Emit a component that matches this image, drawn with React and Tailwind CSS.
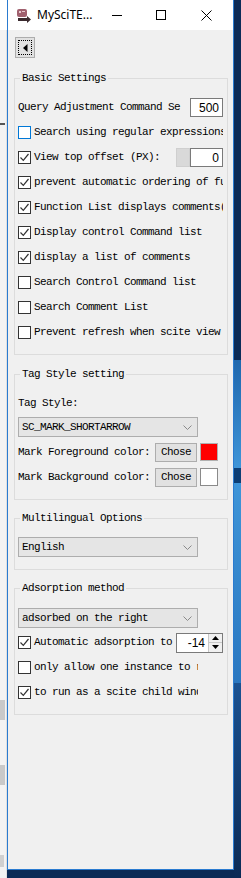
import React from "react";

const mono = "font-['Liberation_Mono',monospace] text-[11px] tracking-[-0.6px] text-black";

function Check({ checked, focus }) {
  return (
    <span
      className={`flex h-[13px] w-[13px] shrink-0 items-center justify-center border bg-white ${
        focus ? "border-[#0078d7]" : "border-[#333]"
      }`}
    >
      {checked && (
        <svg width="11" height="11" viewBox="0 0 11 11">
          <path d="M1.5 5.5 L4.3 8.3 L9.5 2" fill="none" stroke="#333" strokeWidth="1.2" />
        </svg>
      )}
    </span>
  );
}

function CheckRow({ label, checked, focus, width, children }) {
  return (
    <div className="flex h-[25px] items-center">
      <div className={`flex items-center gap-[3px] overflow-hidden whitespace-nowrap ${width || "flex-1"}`}>
        <Check checked={checked} focus={focus} />
        <span className={mono}>{label}</span>
      </div>
      {children}
    </div>
  );
}

function Select({ value }) {
  return (
    <div className="flex h-[20px] w-[180px] items-center justify-between border border-[#adadad] bg-[#e5e5e5] pl-[3px] pr-[5px]">
      <span className={mono}>{value}</span>
      <svg width="9" height="5" viewBox="0 0 9 5">
        <path d="M0.5 0.5 L4.5 4.5 L8.5 0.5" fill="none" stroke="#8a8a8a" strokeWidth="1" />
      </svg>
    </div>
  );
}

function Group({ title, className, children }) {
  return (
    <fieldset className={`ml-[6px] mr-[5px] min-w-0 border border-[#dcdcdc] pl-[3px] pr-[4px] ${className}`}>
      <legend className={`ml-[2px] px-[2px] leading-[14px] ${mono}`}>{title}</legend>
      {children}
    </fieldset>
  );
}

function Chose() {
  return (
    <div className={`flex h-[19px] w-[42px] items-center justify-center border border-[#adadad] bg-[#e1e1e1] ${mono}`}>
      Chose
    </div>
  );
}

export default function App() {
  return (
    <div className="flex h-[878px] w-[241px] overflow-hidden bg-[#0b2a55]">
      {/* window behind, left */}
      <div className="flex h-[878px] w-[7px] flex-col bg-[#f3f3f3]">
        <div className="h-[30px] bg-white" />
        <div className="flex flex-1 flex-col border-r border-[#e0e0e0]">
          <div className="h-[93px]" />
          <div className="h-[2px] w-[5px] bg-[#555]" />
          <div className="h-[575px]" />
          <div className="h-[20px] w-[5px] bg-[#c9c9c9]" />
          <div className="h-[45px]" />
          <div className="h-[20px] w-[5px] bg-[#c9c9c9]" />
          <div className="h-[70px]" />
          <div className="h-[12px] w-[4px] bg-[#d0d0d0]" />
        </div>
      </div>

      {/* dialog */}
      <div className="flex h-[870px] w-[227px] shrink-0 flex-col border-x border-b border-[#2a7bd0] bg-[#f0f0f0]">
        {/* title bar */}
        <div className="flex h-[30px] shrink-0 items-center bg-white">
          <svg className="ml-[8px]" width="16" height="15" viewBox="0 0 16 15">
            <rect x="1" y="1" width="10" height="8" rx="2" fill="#a0606e" />
            <rect x="3" y="3" width="2" height="2" fill="#e8c8cf" />
            <rect x="6" y="3" width="3" height="1" fill="#e8c8cf" />
            <path d="M2 10 L11 10 L11 8 L15 11.5 L11 15 L11 13 L2 13 Z" fill="#3a2a2e" />
          </svg>
          <span className="ml-[5px] font-['Noto_Sans',sans-serif] text-[12px] text-black">MySciTE...</span>
          <div className="ml-[20px] h-px w-[10px] bg-black" />
          <div className="ml-[34px] h-[10px] w-[10px] border border-black" />
          <svg className="ml-[35px]" width="11" height="11" viewBox="0 0 11 11">
            <path d="M0.5 0.5 L10.5 10.5 M10.5 0.5 L0.5 10.5" stroke="#000" strokeWidth="1" />
          </svg>
        </div>

        {/* back button */}
        <div className="ml-[7px] mt-[7px] flex h-[21px] w-[20px] items-center justify-center border border-[#adadad] bg-[#e1e1e1]">
          <div className="flex h-[15px] w-[14px] items-center justify-center border border-dotted border-black">
            <svg width="5" height="8" viewBox="0 0 5 8">
              <path d="M4.5 0 L0 4 L4.5 8 Z" fill="#000" />
            </svg>
          </div>
        </div>

        <Group title="Basic Settings" className="mt-[13px] pb-[9px] pt-[10px]">
          <div className="flex h-[25px] items-center">
            <span className={`flex-1 overflow-hidden whitespace-nowrap ${mono}`}>Query Adjustment Command Se</span>
            <div className="flex h-[19px] w-[33px] items-center justify-end border border-[#7a7a7a] bg-white pr-[3px] font-['Liberation_Sans',sans-serif] text-[12px]">
              500
            </div>
          </div>
          <CheckRow label="Search using regular expressions" focus />
          <CheckRow label="View top offset (PX):" checked>
            <div className="h-[19px] w-[14px] border border-[#cfcfcf] bg-[#d9d9d9]" />
            <div className="flex h-[19px] w-[33px] items-center justify-end border border-[#7a7a7a] bg-white pr-[3px] font-['Liberation_Sans',sans-serif] text-[12px]">
              0
            </div>
          </CheckRow>
          <CheckRow label="prevent automatic ordering of functions" checked />
          <CheckRow label="Function List displays comments(" checked />
          <CheckRow label="Display control Command list" checked />
          <CheckRow label="display a list of comments" checked />
          <CheckRow label="Search Control Command list" />
          <CheckRow label="Search Comment List" />
          <CheckRow label="Prevent refresh when scite view" />
        </Group>

        <Group title="Tag Style setting" className="mt-[12px] pb-[12px] pt-[12px]">
          <div className={`flex h-[20px] items-center ${mono}`}>Tag Style:</div>
          <div className="mt-[4px]">
            <Select value="SC_MARK_SHORTARROW" />
          </div>
          <div className="mt-[5px] flex h-[20px] items-center">
            <span className={`w-[137px] whitespace-nowrap ${mono}`}>Mark Foreground color:</span>
            <Chose />
            <div className="ml-[3px] h-[18px] w-[18px] border border-[#b0b0b0] bg-[#ff0000]" />
          </div>
          <div className="mt-[5px] flex h-[20px] items-center">
            <span className={`w-[137px] whitespace-nowrap ${mono}`}>Mark Background color:</span>
            <Chose />
            <div className="ml-[3px] h-[18px] w-[18px] border border-[#8a8a8a] bg-white" />
          </div>
        </Group>

        <Group title="Multilingual Options" className="mt-[11px] pb-[12px] pt-[12px]">
          <Select value="English" />
        </Group>

        <Group title="Adsorption method" className="mt-[11px] pb-[9px] pt-[13px]">
          <Select value="adsorbed on the right" />
          <div className="mt-[2px]">
            <CheckRow label="Automatic adsorption to" checked width="w-[155px]">
              <div className="ml-auto flex h-[20px] w-[47px] items-center border border-[#7a7a7a] bg-white">
                <span className="flex-1 pr-[3px] text-right font-['Liberation_Sans',sans-serif] text-[12px]">-14</span>
                <div className="flex h-[18px] w-[14px] flex-col border-l border-[#c8c8c8] bg-[#f0f0f0]">
                  <div className="flex flex-1 items-center justify-center border-b border-[#c8c8c8]">
                    <svg width="7" height="4" viewBox="0 0 7 4"><path d="M0 4 L3.5 0 L7 4 Z" fill="#000" /></svg>
                  </div>
                  <div className="flex flex-1 items-center justify-center">
                    <svg width="7" height="4" viewBox="0 0 7 4"><path d="M0 0 L3.5 4 L7 0 Z" fill="#000" /></svg>
                  </div>
                </div>
              </div>
            </CheckRow>
          </div>
          <CheckRow label="only allow one instance to run" width="w-[180px]" />
          <CheckRow label="to run as a scite child window" checked width="w-[180px]" />
        </Group>
      </div>

      {/* desktop, right */}
      <div className="flex h-[878px] w-[7px] flex-col">
        <div className="h-[360px] bg-[#0c2b57]" />
        <div className="h-[108px] bg-linear-to-b from-[#1f67ad] to-[#3f95d8]" />
        <div className="h-[15px] bg-[#0d3e74]" />
        <div className="h-[200px] bg-linear-to-b from-[#3f95d8] to-[#2a77c0]" />
        <div className="flex-1 bg-linear-to-b from-[#1a5292] to-[#0b2a55]" />
      </div>
    </div>
  );
}
